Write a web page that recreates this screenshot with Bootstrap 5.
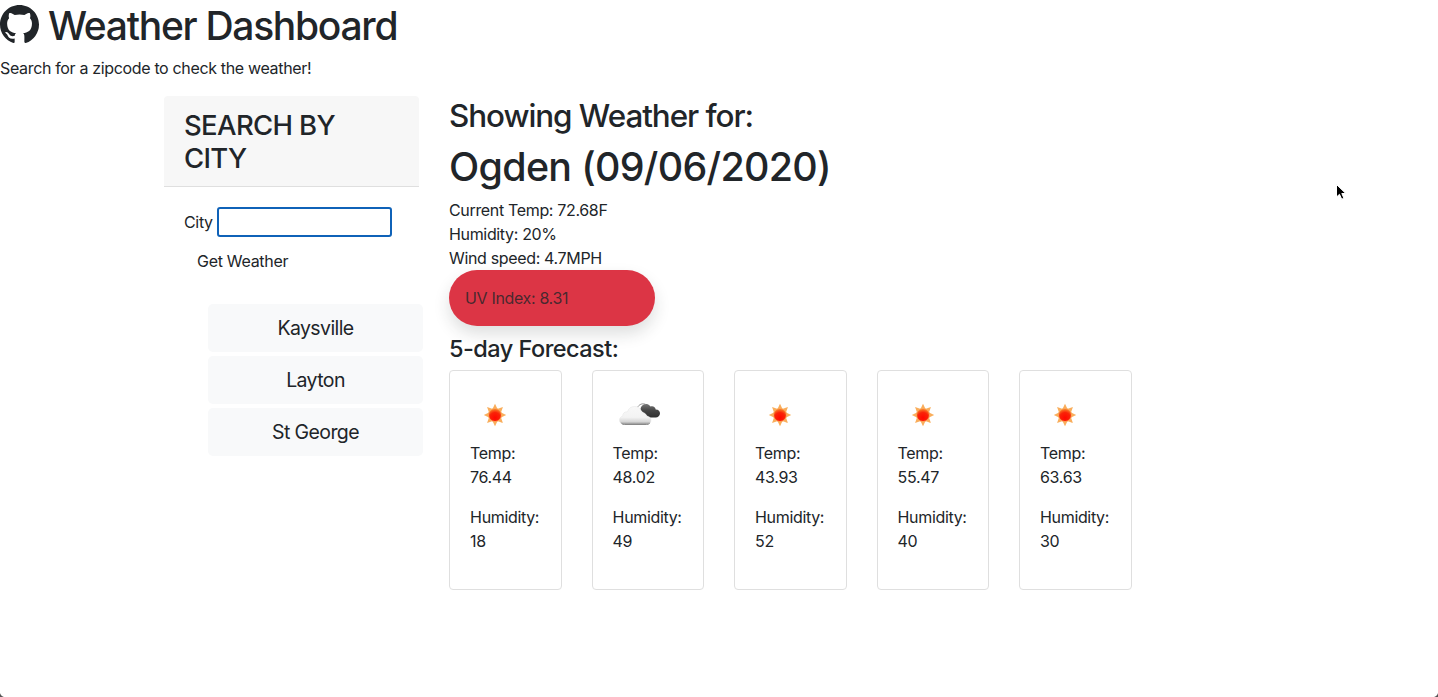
<!DOCTYPE html>
<html lang="en">
<head>
<meta charset="utf-8">
<meta name="viewport" content="width=device-width, initial-scale=1">
<title>Weather Dashboard</title>
<link href="https://cdn.jsdelivr.net/npm/bootstrap@5.3.0/dist/css/bootstrap.min.css" rel="stylesheet">
<style>
body{font-family:Inter,"Liberation Sans",sans-serif;font-size:16px;color:#212529;background:#fff;height:697px;overflow:hidden;letter-spacing:-.34px}
h1,h2,h3,h4{color:#212529}
.brand{font-size:39px;line-height:51px;height:48px;letter-spacing:-1.29px}
.brand svg{margin:5px 9px 0 0}
.page{max-width:1140px;--bs-gutter-x:30px}
.page .row{--bs-gutter-x:30px}
.search-head{background:#f7f7f7;border-bottom:1px solid #dfdfdf;padding:13px 20px 11px;border-radius:4px 4px 0 0}
.search-head h3{font-size:27.5px;line-height:33px;letter-spacing:-.65px}
.search-body{padding:20px}
.city-input{width:175px;height:30px;border:2px solid #0f62b8;border-radius:3px;outline:0;background:#fff;margin-left:4px}
.get-btn{padding:6px 12px;border:1px solid transparent;letter-spacing:-.3px;color:#212529;margin-top:5px}
.city-list{margin:4px -4px 0 44px;gap:4px}
.city-btn{height:48px;background:#f8f9fa;border-radius:5px;font-size:19.5px;letter-spacing:-.6px;padding:2px 0 0;border:0;color:#212529}
.showing{font-size:31.4px;line-height:38.4px;letter-spacing:-1.05px;padding-top:.9px;margin-bottom:7px}
.place{font-size:39.4px;line-height:48px;letter-spacing:-.69px;padding-top:.9px;margin-bottom:7px}
.uv{width:206.25px;height:56px;background:#dc3545;color:rgba(33,37,41,.8)}
.forecast-title{font-size:23.5px;line-height:29px;letter-spacing:-.53px;margin:8px 0 7px}
.forecast{position:relative;left:.1px}
.day{border:1px solid #dfdfdf;border-radius:4px;padding:20px;height:220px}
.day svg{display:block}
.pointer{position:absolute;left:1335px;top:183px}
.corner-l,.corner-r{position:absolute;bottom:0;width:5px;height:5px}
.corner-l{left:0;background:radial-gradient(circle at 100% 0,transparent 4.6px,#555 5.4px)}
.corner-r{right:0;background:radial-gradient(circle at 0 0,transparent 4.6px,#555 5.4px)}
</style>
</head>
<body>
<svg width="0" height="0" class="position-absolute">
<defs>
<radialGradient id="core" cx=".5" cy=".72" r=".75"><stop offset="0" stop-color="#ff0800"/><stop offset=".55" stop-color="#fa2308"/><stop offset="1" stop-color="#f99b31"/></radialGradient>
<linearGradient id="white" x1="0" y1="0" x2="0" y2="1"><stop offset="0" stop-color="#f8f8f8"/><stop offset=".6" stop-color="#f3f3f3"/><stop offset=".85" stop-color="#d5d5d5"/><stop offset="1" stop-color="#888"/></linearGradient>
<linearGradient id="dark" x1="0" y1="0" x2="0" y2="1"><stop offset="0" stop-color="#777"/><stop offset=".5" stop-color="#454545"/><stop offset="1" stop-color="#303030"/></linearGradient>
<symbol id="sun" viewBox="0 0 50 50">
<g fill="#f9ae5c"><path id="ray" d="M25 12.800 28 19h-6z"/><use href="#ray" transform="rotate(45 25 24)"/><use href="#ray" transform="rotate(90 25 24)"/><use href="#ray" transform="rotate(135 25 24)"/><use href="#ray" transform="rotate(180 25 24)"/><use href="#ray" transform="rotate(225 25 24)"/><use href="#ray" transform="rotate(270 25 24)"/><use href="#ray" transform="rotate(315 25 24)"/></g>
<circle cx="25" cy="24" r="6.500" fill="url(#core)" stroke="#fba95c" stroke-width=".9"/>
</symbol>
<symbol id="clouds" viewBox="0 0 50 50">
<path d="M27.500 19c0-4 3-6.500 6-6 2 .2 3.300 1.400 4 2.600 2.600-1 5 .7 5.200 2.800 3 .1 4.300 1.700 4.300 3.900 0 2.600-2 4.200-4.300 4.200h-6.700z" fill="url(#dark)"/>
<path d="M24.500 16.500c1.500-3.200 5-4.500 8-3.200" fill="none" stroke="#999" stroke-width="1"/>
<path d="M11.500 33.500c-3 0-5-1.800-5-4.300 0-2.300 1.600-3.800 3.200-4.100-.1-2.800 2-4.700 4.700-4.200 1-3.500 3.500-5.400 7-5.400 4.400 0 6.800 2.700 7.300 6.300 2.400-.6 4.500.8 4.800 3.200 2.800.2 4.500 1.800 4.500 4.200 0 2.600-1.900 4.300-4.700 4.300z" fill="url(#white)" stroke="#e4e4e4" stroke-width=".5"/>
<path d="M8.500 32.300c.8.800 1.700 1.200 3 1.200h22c1.300 0 2.400-.4 3.200-1.200" fill="none" stroke="#888" stroke-width="1"/>
</symbol>
</defs>
</svg>

<header>
<h1 class="brand d-flex mb-2"><svg class="flex-shrink-0" width="39" height="39" viewBox="0 0 16 16" fill="#212529"><path d="M8 0C3.580 0 0 3.580 0 8c0 3.540 2.290 6.530 5.470 7.590.4.070.55-.17.55-.38 0-.19-.01-.82-.01-1.490-2.010.37-2.530-.49-2.690-.94-.09-.23-.48-.94-.82-1.130-.28-.15-.68-.52-.01-.53.63-.01 1.080.58 1.230.82.72 1.210 1.870.87 2.330.66.07-.52.28-.87.51-1.070-1.780-.2-3.640-.89-3.640-3.950 0-.87.31-1.590.82-2.150-.08-.2-.36-1.020.08-2.120 0 0 .67-.21 2.200.82.64-.18 1.320-.27 2-.27s1.360.09 2 .27c1.530-1.040 2.200-.82 2.200-.82.44 1.100.16 1.920.08 2.120.51.56.82 1.270.82 2.150 0 3.070-1.870 3.750-3.650 3.950.29.25.54.73.54 1.480 0 1.070-.01 1.930-.01 2.200 0 .21.15.46.55.38A8.010 8.010 0 0 0 16 8c0-4.420-3.580-8-8-8"/></svg><span>Weather Dashboard</span></h1>
<p class="mb-3">Search for a zipcode to check the weather!</p>
</header>

<main class="container page">
<div class="row">
<aside class="col-3">
<div class="search-head"><h3 class="m-0">SEARCH BY<br>CITY</h3></div>
<div class="search-body">
<div class="d-flex align-items-center"><label for="city">City</label><input id="city" class="city-input" type="text"></div>
<button class="btn get-btn" type="button">Get Weather</button>
</div>
<div class="city-list d-flex flex-column">
<button class="btn city-btn" type="button">Kaysville</button>
<button class="btn city-btn" type="button">Layton</button>
<button class="btn city-btn" type="button">St George</button>
</div>
</aside>
<section class="col-9">
<h2 class="showing">Showing Weather for:</h2>
<h1 class="place">Ogden (09/06/2020)</h1>
<div>Current Temp: 72.68F</div>
<div>Humidity: 20%</div>
<div>Wind speed: 4.7MPH</div>
<div class="uv p-3 rounded-pill shadow">UV Index: 8.31</div>
<h4 class="forecast-title">5-day Forecast:</h4>
<div class="row forecast">
<div class="col-2"><div class="day"><svg width="50" height="50"><use href="#sun"/></svg><p class="mb-3">Temp:<br>76.44</p><p class="mb-3">Humidity:<br>18</p></div></div>
<div class="col-2"><div class="day"><svg width="50" height="50"><use href="#clouds"/></svg><p class="mb-3">Temp:<br>48.02</p><p class="mb-3">Humidity:<br>49</p></div></div>
<div class="col-2"><div class="day"><svg width="50" height="50"><use href="#sun"/></svg><p class="mb-3">Temp:<br>43.93</p><p class="mb-3">Humidity:<br>52</p></div></div>
<div class="col-2"><div class="day"><svg width="50" height="50"><use href="#sun"/></svg><p class="mb-3">Temp:<br>55.47</p><p class="mb-3">Humidity:<br>40</p></div></div>
<div class="col-2"><div class="day"><svg width="50" height="50"><use href="#sun"/></svg><p class="mb-3">Temp:<br>63.63</p><p class="mb-3">Humidity:<br>30</p></div></div>
</div>
</section>
</div>
</main>
<svg class="pointer" width="14" height="20" viewBox="0 0 14 20"><path d="M1.500 1.500v12.500l3-2.700 2.200 4.900 2.200-1-2.100-4.700h4z" stroke="#fff" stroke-width="1" fill="#000"/></svg>
<div class="corner-l"></div><div class="corner-r"></div>
<script src="https://cdn.jsdelivr.net/npm/bootstrap@5.3.0/dist/js/bootstrap.bundle.min.js"></script>
</body>
</html>
